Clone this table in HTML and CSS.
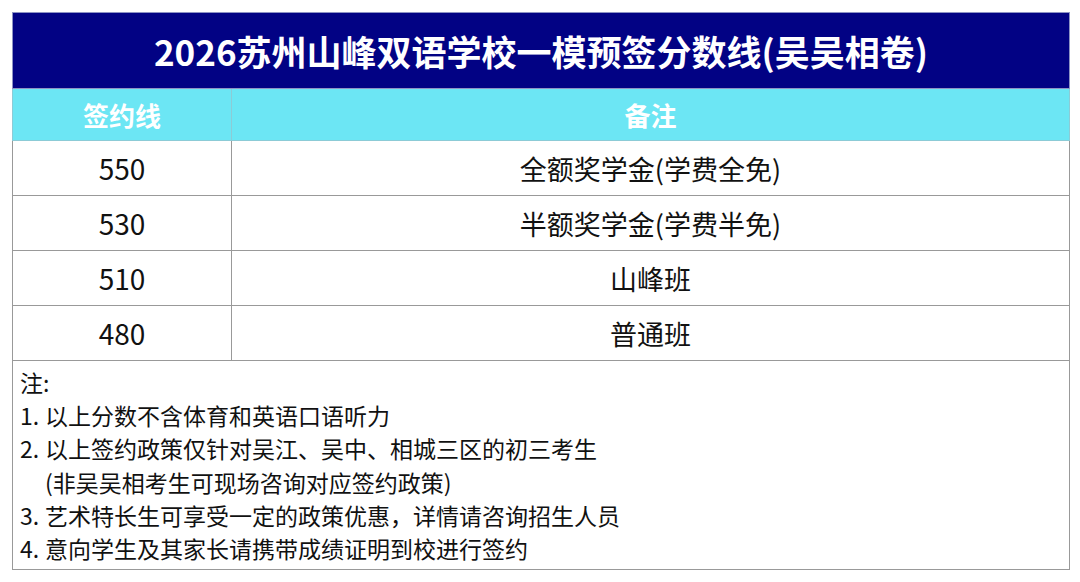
FILE: index.html
```html
<!DOCTYPE html>
<html lang="zh-CN">
<head>
<meta charset="utf-8">
<title>2026苏州山峰双语学校一模预签分数线</title>
<link rel="stylesheet" href="styles.css">
</head>
<body>
<div class="page">
  <table class="score">
    <colgroup><col class="c1"><col class="c2"></colgroup>
    <thead>
      <tr class="title-row"><th colspan="2">2026苏州山峰双语学校一模预签分数线(吴吴相卷)</th></tr>
      <tr class="head-row"><th>签约线</th><th>备注</th></tr>
    </thead>
    <tbody>
      <tr class="data-row"><td class="num">550</td><td>全额奖学金(学费全免)</td></tr>
      <tr class="data-row"><td class="num">530</td><td>半额奖学金(学费半免)</td></tr>
      <tr class="data-row"><td class="num">510</td><td>山峰班</td></tr>
      <tr class="data-row"><td class="num">480</td><td>普通班</td></tr>
      <tr class="notes-row">
        <td colspan="2">
          <div class="notes">
            <div class="line">注:</div>
            <div class="item"><span class="no">1.</span><span class="txt">以上分数不含体育和英语口语听力</span></div>
            <div class="item"><span class="no">2.</span><span class="txt">以上签约政策仅针对吴江、吴中、相城三区的初三考生<br>(非吴吴相考生可现场咨询对应签约政策)</span></div>
            <div class="item"><span class="no">3.</span><span class="txt">艺术特长生可享受一定的政策优惠，详情请咨询招生人员</span></div>
            <div class="item"><span class="no">4.</span><span class="txt">意向学生及其家长请携带成绩证明到校进行签约</span></div>
          </div>
        </td>
      </tr>
    </tbody>
  </table>
</div>
</body>
</html>
```

FILE: styles.css
```css
html, body {
  margin: 0;
  padding: 0;
  background: #ffffff;
}
body {
  font-family: "Noto Sans CJK SC", "Noto Sans", "Liberation Sans", sans-serif;
  color: #111111;
}
.page {
  padding: 12px;
}
.score {
  width: 1057px;
  border-collapse: collapse;
  table-layout: fixed;
}
.c1 { width: 219px; }
.c2 { width: 838px; }
.score th, .score td {
  border: 1px solid #999999;
  padding: 0;
  text-align: center;
  vertical-align: middle;
}
.title-row th {
  height: 75px;
  background: #020284;
  color: #ffffff;
  font-size: 35px;
  font-weight: 700;
  border-color: #8d93c4;
}
.head-row th {
  height: 51px;
  background: #6ce6f4;
  color: #ffffff;
  font-size: 26px;
  font-weight: 700;
  border-color: #8ccbd6;
}
.data-row td {
  height: 54px;
  font-size: 27px;
  font-weight: 400;
  color: #111111;
}
.data-row td.num {
  font-size: 28px;
}
.notes-row td {
  text-align: left;
  vertical-align: top;
}
.notes {
  padding: 5px 0 4px 7px;
  font-size: 23px;
  line-height: 33.2px;
}
.item {
  display: flex;
}
.no {
  flex: 0 0 25px;
}
.txt {
  flex: 1 1 auto;
}
```
